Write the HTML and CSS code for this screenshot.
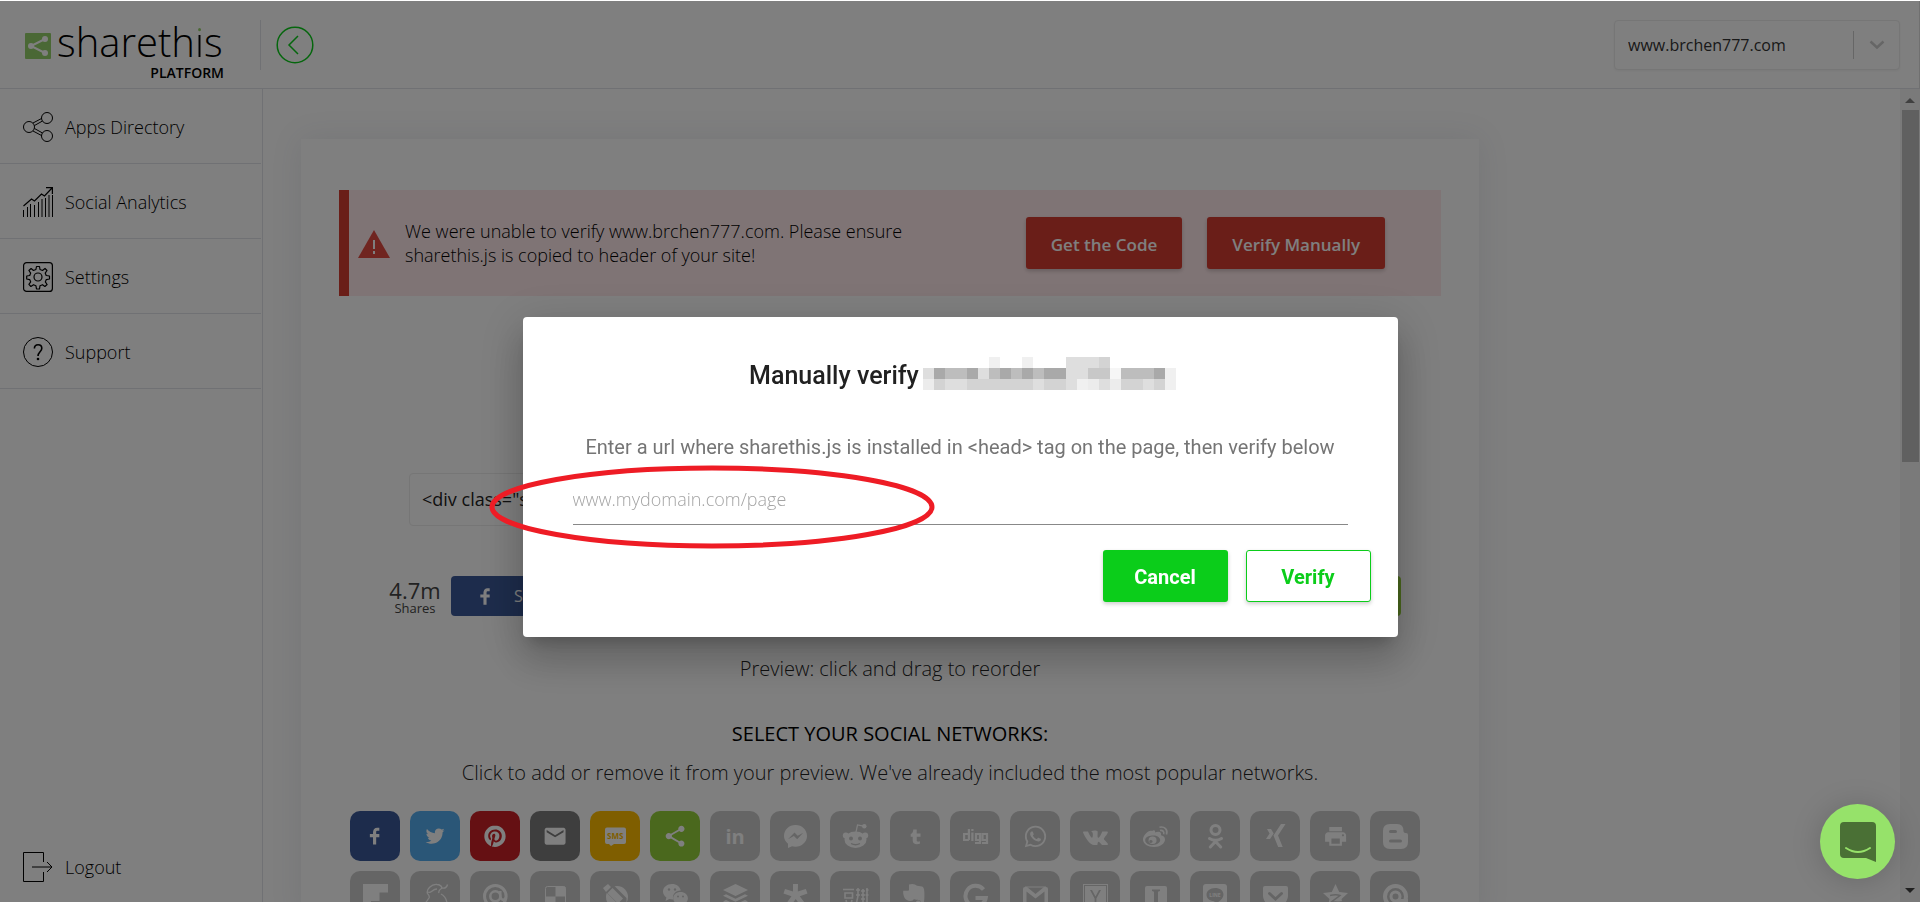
FILE: index.html
```
<!DOCTYPE html>
<html lang="en">
<head>
<meta charset="utf-8">
<title>ShareThis Platform</title>
<link rel="stylesheet" href="styles.css">
</head>
<body>
<div class="app">
  <header class="topbar">
    <a class="brand" href="#" aria-label="sharethis platform">
      <span class="brand-row">
        <svg class="brand-mark" viewBox="0 0 26 26" aria-hidden="true"><rect width="26" height="26" rx="1" fill="#95d06a"/><path d="M20 6 6 13l14 7" fill="none" stroke="#fff" stroke-width="2"/><circle cx="20" cy="6" r="3" fill="#fff"/><circle cx="6" cy="13" r="3" fill="#fff"/><circle cx="20" cy="20" r="3" fill="#fff"/></svg>
        <span class="wordmark">shareth<span class="wordmark-i">i</span>s</span>
      </span>
      <span class="brand-sub">PLATFORM</span>
    </a>
    <button class="back" type="button" aria-label="Back">
      <svg viewBox="0 0 38 38" aria-hidden="true"><circle cx="19" cy="19" r="17.8"/><path d="m22 10-9 9 9 9"/></svg>
    </button>
    <div class="site-picker">
      <select aria-label="Site"><option>www.brchen777.com</option></select>
      <span class="picker-arrow"><svg viewBox="0 0 16 10" aria-hidden="true"><path d="m1.500 1.500 6.500 6 6.500-6"/></svg></span>
    </div>
  </header>
  <div class="body">
    <nav class="sidebar">
      <a class="nav-item" href="#"><svg viewBox="0 0 30 30" aria-hidden="true"><g fill="none" stroke="#000"><circle cx="6" cy="15" r="5.500"/><circle cx="24" cy="6" r="5.500"/><circle cx="24" cy="24" r="5.500"/><path d="m10 11 8.500-4.500M11.500 13.500l8-4.500M10 19l8.500 4.500M11.500 16.500l8 4.500"/></g></svg>Apps Directory</a>
      <a class="nav-item" href="#"><svg viewBox="0 0 30 30" aria-hidden="true"><path d="M.5 23v7M4.500 20v10M7.500 17v13M11.500 18v12M15.500 15v15M19 12v18M22.500 11v19M26 8v22M29.500 8v22" fill="none" stroke="#000"/><path d="m.5 19 8-7 3 2 7-7 3 2L29 1M23 .6h6.400V7" fill="none" stroke="#000" stroke-width="1.200"/></svg>Social Analytics</a>
      <a class="nav-item" href="#"><svg viewBox="0 0 30 30" aria-hidden="true"><g fill="none" stroke="#000" stroke-width="1.200"><rect x=".6" y=".6" width="28.800" height="28.800" rx="3"/><circle cx="15" cy="15" r="4"/><path d="M13.500 4.500h3l.5 3 2.500 1 2.500-2 2 2-1.800 2.600 1 2.400 3.300.5v3l-3.200.6-1 2.300 1.800 2.600-2.200 2-2.400-1.800-2.500 1-.5 3.300h-3l-.6-3.300-2.400-1-2.600 1.800-2-2.200 1.800-2.400-1-2.300-3-.6v-3l3-.5 1-2.400-1.800-2.600 2.200-2 2.400 2 2.400-1z" stroke-linejoin="round"/></g></svg>Settings</a>
      <a class="nav-item" href="#"><svg viewBox="0 0 30 30" aria-hidden="true"><circle cx="15" cy="15" r="14.500" fill="none" stroke="#000"/><path d="M11.400 11.400c0-5 7.400-4.800 7.400-.2 0 3.400-3.800 3.800-3.800 7.800" fill="none" stroke="#000" stroke-width="1.600"/><circle cx="15" cy="22" r="1.300"/></svg>Support</a>
      <a class="nav-item nav-logout" href="#"><svg viewBox="0 0 30 30" aria-hidden="true"><path d="M20.500 10V.5H.5v29h20V20M9 15h20M24 10l5 5-5 5" fill="none" stroke="#000"/></svg>Logout</a>
    </nav>
    <main class="content">
      <section class="card">
        <div class="alert">
          <svg class="alert-icon" viewBox="0 0 32 28" aria-hidden="true"><path d="M16 0 32 28H0z" fill="#e04a40"/><path d="M16 10v9M16 21v3" stroke="#fff" stroke-width="2"/></svg>
          <p class="alert-text">We were unable to verify www.brchen777.com. Please ensure sharethis.js is copied to header of your site!</p>
          <div class="alert-actions">
            <button class="btn btn-red" type="button">Get the Code</button>
            <button class="btn btn-red" type="button">Verify Manually</button>
          </div>
        </div>
        <div class="code">&lt;div class="sharethis-inline-share-buttons"&gt;&lt;/div&gt;</div>
        <div class="share-row">
          <div class="total"><strong>4.7m</strong><span>Shares</span></div>
          <button class="share share-first fb" type="button"><svg viewBox="0 0 40 40" aria-hidden="true"><path d="m21.700 16.700h5v5h-5v11.600h-5v-11.600h-5v-5h5v-2.100c0-2 .6-4.500 1.800-5.900 1.300-1.300 2.800-2 4.700-2h3.500v5h-3.500c-.9 0-1.500.6-1.500 1.500z"/></svg>Share</button>
          <button class="share tw" type="button">Tweet</button>
          <button class="share pin" type="button">Pin</button>
          <button class="share mail" type="button">Email</button>
          <button class="share sms" type="button">SMS</button>
          <button class="share st" type="button">Share</button>
        </div>
        <p class="hint preview">Preview: click and drag to reorder</p>
        <h2 class="heading">SELECT YOUR SOCIAL NETWORKS:</h2>
        <p class="hint">Click to add or remove it from your preview. We've already included the most popular networks.</p>
        <div class="tiles">
          <button class="tile fb" type="button" aria-label="Facebook"><svg viewBox="0 0 50 50"><path transform="translate(12.500 12.500) scale(.63)" d="m21.700 16.700h5v5h-5v11.600h-5v-11.600h-5v-5h5v-2.100c0-2 .6-4.500 1.800-5.900 1.300-1.300 2.800-2 4.700-2h3.500v5h-3.500c-.9 0-1.500.6-1.500 1.500z"/></svg></button>
          <button class="tile tw" type="button" aria-label="Twitter"><svg viewBox="0 0 50 50"><path transform="translate(12.500 12.500) scale(.63)" d="m31.500 11.700c1.300-.8 2.200-2 2.700-3.400-1.400.7-2.700 1.200-4 1.400-1.100-1.200-2.600-1.900-4.400-1.900-1.700 0-3.200.6-4.400 1.800-1.200 1.200-1.800 2.700-1.800 4.400 0 .5.100.9.200 1.300-5.100-.1-9.400-2.300-12.700-6.400-.6 1-.9 2.100-.9 3.100 0 2.200 1 3.900 2.800 5.200-1.100-.1-2-.4-2.800-.8 0 1.500.5 2.800 1.400 4 .9 1.100 2.100 1.800 3.500 2.100-.5.100-1 .2-1.600.2-.5 0-.9 0-1.100-.1.400 1.200 1.100 2.300 2.100 3 1.100.8 2.300 1.200 3.600 1.300-2.200 1.700-4.700 2.600-7.600 2.600-.7 0-1.200 0-1.500-.1 2.800 1.900 6 2.800 9.500 2.800 3.500 0 6.700-.9 9.400-2.700 2.800-1.800 4.800-4.100 6.100-6.700 1.300-2.600 1.900-5.300 1.900-8.100v-.8c1.300-.9 2.300-2 3.100-3.200-1.100.5-2.300.8-3.500 1z"/></svg></button>
          <button class="tile pin" type="button" aria-label="Pinterest"><svg viewBox="0 0 50 50"><path transform="translate(14.300 14.600) scale(.89)" d="M12.017 0C5.396 0 .029 5.367.029 11.987c0 5.079 3.158 9.417 7.618 11.162-.105-.949-.199-2.403.041-3.439.219-.937 1.406-5.957 1.406-5.957s-.359-.72-.359-1.781c0-1.663.967-2.911 2.168-2.911 1.024 0 1.518.769 1.518 1.688 0 1.029-.653 2.567-.992 3.992-.285 1.193.6 2.165 1.775 2.165 2.128 0 3.768-2.245 3.768-5.487 0-2.861-2.063-4.869-5.008-4.869-3.410 0-5.409 2.562-5.409 5.199 0 1.033.394 2.143.889 2.741.099.120.112.225.085.345-.090.375-.293 1.199-.334 1.363-.053.225-.172.271-.401.165-1.495-.690-2.433-2.878-2.433-4.646 0-3.776 2.748-7.252 7.920-7.252 4.158 0 7.392 2.967 7.392 6.923 0 4.135-2.607 7.462-6.233 7.462-1.214 0-2.354-.629-2.758-1.379l-.749 2.848c-.269 1.045-1.004 2.352-1.498 3.146 1.123.345 2.306.535 3.550.535 6.607 0 11.985-5.365 11.985-11.987C23.970 5.390 18.592.026 11.985.026z"/></svg></button>
          <button class="tile mail" type="button" aria-label="Email"><svg viewBox="0 0 50 50"><path transform="translate(12.500 12.700) scale(.63)" d="m33.400 13.400v-3.400l-13.400 8.400-13.400-8.400v3.400l13.400 8.200z m0-6.800q1.300 0 2.300 1.100t.9 2.300v20q0 1.300-.9 2.300t-2.300 1.100h-26.800q-1.300 0-2.300-1.100t-.9-2.300v-20q0-1.300.9-2.300t2.300-1.100h26.800z"/></svg></button>
          <button class="tile sms" type="button" aria-label="SMS"><svg viewBox="0 0 50 50"><path d="M17 16.500h17q2 0 2 2V31q0 2-2 2H24l-3 2-2-2h-2q-2 0-2-2V18.500q0-2 2-2z"/><text class="t-sms" x="25.300" y="28">SMS</text></svg></button>
          <button class="tile st" type="button" aria-label="ShareThis"><svg viewBox="0 0 50 50"><path transform="translate(12.500 12.500) scale(.63)" d="m30 26.800c2.700 0 4.800 2.200 4.800 4.800s-2.100 5-4.800 5-4.800-2.300-4.800-5c0-.3 0-.7 0-1.100l-11.800-6.800c-.9.800-2.100 1.300-3.400 1.300-2.700 0-5-2.300-5-5s2.300-5 5-5c1.300 0 2.500.5 3.400 1.300l11.800-6.800c-.1-.4-.2-.8-.2-1.100 0-2.800 2.300-5 5-5s5 2.200 5 5-2.300 5-5 5c-1.300 0-2.500-.6-3.400-1.400l-11.800 6.800c.1.400.2.800.2 1.200s-.1.800-.2 1.200l11.900 6.800c.9-.7 2.100-1.200 3.300-1.200z"/></svg></button>
          <button class="tile" type="button" aria-label="LinkedIn"><svg viewBox="0 0 50 50"><text class="t-in" x="25" y="33">in</text></svg></button>
          <button class="tile" type="button" aria-label="Messenger"><svg viewBox="0 0 50 50"><path fill-rule="evenodd" d="M25.500 14C19 14 14 18.800 14 25c0 3 1.500 5.800 4 7.700V37l4-1.700c7.800 2 15-3.300 15-10.300 0-6.200-5-11-11.500-11zM18 28.300l6.500-6.800 3.200 3.200 5.500-3-6 6.500-3.300-3.200z"/></svg></button>
          <button class="tile" type="button" aria-label="Reddit"><svg viewBox="0 0 50 50"><ellipse cx="25.500" cy="28.700" rx="11" ry="8.200"/><circle cx="15.800" cy="24.500" r="3"/><circle cx="35.200" cy="24.500" r="3"/><path d="m26 21 1.500-7 6 1.200" class="line" stroke-width="1.200"/><circle cx="34.300" cy="15.300" r="2.200"/><g class="cut"><circle cx="21" cy="27.500" r="2"/><circle cx="30" cy="27.500" r="2"/></g><path class="cutline" d="M21 32.500q4.500 2.500 9 0" stroke-width="1.300"/></svg></button>
          <button class="tile" type="button" aria-label="Tumblr"><svg viewBox="0 0 50 50"><path d="M23.300 18.500h3.400v4h3.800v3.200h-3.800v3.600c0 1.700 1.800 1.500 3.200.9v2.600c-4 1.200-7.200.2-7.200-3.300v-3.800h-2v-2.600c1.600-.6 2.500-2 2.600-4.600z"/></svg></button>
          <button class="tile" type="button" aria-label="Digg"><svg viewBox="0 0 50 50"><path class="line" stroke-width="2.200" d="M18.900 18v11M18.900 23h-4.800v6h4.800M22.400 18v2M22.400 21.500V30M30 33v-10h-4v6h4M30 27v5h-5M37 22v10h-5M37 23h-4.500v6H37"/></svg></button>
          <button class="tile" type="button" aria-label="WhatsApp"><svg viewBox="0 0 50 50"><path transform="translate(14.800 14.800) scale(.89)" d="M17.472 14.382c-.297-.149-1.758-.867-2.030-.967-.273-.099-.471-.148-.670.150-.197.297-.767.966-.940 1.164-.173.199-.347.223-.644.075-.297-.150-1.255-.463-2.390-1.475-.883-.788-1.480-1.761-1.653-2.059-.173-.297-.018-.458.130-.606.134-.133.298-.347.446-.520.149-.174.198-.298.298-.497.099-.198.050-.371-.025-.520-.075-.149-.669-1.612-.916-2.207-.242-.579-.487-.500-.669-.510-.173-.008-.371-.010-.570-.010-.198 0-.520.074-.792.372-.272.297-1.040 1.016-1.040 2.479 0 1.462 1.065 2.875 1.213 3.074.149.198 2.096 3.200 5.077 4.487.709.306 1.262.489 1.694.625.712.227 1.360.195 1.871.118.571-.085 1.758-.719 2.006-1.413.248-.694.248-1.289.173-1.413-.074-.124-.272-.198-.570-.347m-5.421 7.403h-.004a9.870 9.870 0 01-5.031-1.378l-.361-.214-3.741.982.998-3.648-.235-.374a9.860 9.860 0 01-1.510-5.260c.001-5.450 4.436-9.884 9.888-9.884 2.640 0 5.122 1.030 6.988 2.898a9.825 9.825 0 012.893 6.994c-.003 5.450-4.437 9.884-9.885 9.884m8.413-18.297A11.815 11.815 0 0012.050 0C5.495 0 .160 5.335.157 11.892c0 2.096.547 4.142 1.588 5.945L.057 24l6.305-1.654a11.882 11.882 0 005.683 1.448h.005c6.554 0 11.890-5.335 11.893-11.893a11.821 11.821 0 00-3.480-8.413z"/></svg></button>
          <button class="tile" type="button" aria-label="VK"><svg viewBox="0 0 50 50"><path transform="translate(13 14.300) scale(1.040)" d="M13.162 18.994c.609 0 .858-.406.851-.915-.031-1.917.714-2.949 2.059-1.604 1.488 1.488 1.796 2.519 3.603 2.519h3.200c.808 0 1.126-.260 1.126-.668 0-.863-1.421-2.386-2.625-3.504-1.686-1.565-1.765-1.602-.313-3.486 1.801-2.339 4.157-5.336 2.073-5.336h-3.981c-.772 0-.828.435-1.103 1.083-.995 2.347-2.886 5.387-3.604 4.922-.751-.485-.407-2.406-.350-5.261.015-.754.011-1.271-1.141-1.539-.629-.145-1.241-.205-1.809-.205-2.273 0-3.841.953-2.950 1.119 1.571.293 1.420 3.692 1.054 5.160-.638 2.556-3.036-2.024-4.035-4.305-.241-.548-.315-.974-1.175-.974h-3.255c-.492 0-.787.160-.787.516 0 .602 2.960 6.720 5.786 9.770 2.756 2.975 5.480 2.708 7.376 2.708z"/></svg></button>
          <button class="tile" type="button" aria-label="Weibo"><svg viewBox="0 0 50 50"><path fill-rule="evenodd" d="M22 20c-3-1.500-9 4-9 8.500s5 7.500 11 7.500 11-3.500 11-7.500c0-2.500-2-3.800-4-4.200.8-3-1.500-4.300-6-2.800.5-1.800-.5-3-3-1.500zm0 4.500c4.500-.5 8 1.500 8.200 4.300s-3 5-7.200 5.300-7.600-1.600-7.800-4.500 2.700-4.800 6.800-5.100z"/><path fill-rule="evenodd" d="M22.500 25.500a4 3.800 0 1 0 .1 7.600 4 3.800 0 0 0-.1-7.600zm-1.500 3.500a1.700 1.500 0 1 1-.1 3 1.700 1.500 0 0 1 .1-3z"/><path class="line" stroke-width="1.600" d="M29.500 16.200c5-1.200 8.700 2.500 7 7.300M30 19.500c3-.5 4.500 1.500 3.600 3.800"/></svg></button>
          <button class="tile" type="button" aria-label="Odnoklassniki"><svg viewBox="0 0 50 50"><circle class="line" cx="25.500" cy="19" r="4.500" stroke-width="3"/><path class="line" stroke-width="3" stroke-linecap="round" d="M19.500 27.500q6 3.500 12 0M25.500 30.500l-5.200 5.500M25.500 30.500l5.200 5.500"/></svg></button>
          <button class="tile" type="button" aria-label="Xing"><svg viewBox="0 0 50 50"><path d="M31 13h4.500L28 24.500 32.700 36h-4.500L23.500 24.500zM17 18h4l2.700 4.500L20 28h-4l3.600-5.500z"/></svg></button>
          <button class="tile" type="button" aria-label="Print"><svg viewBox="0 0 50 50"><path transform="translate(13 12.800) scale(1.050)" d="M19 8H5c-1.660 0-3 1.340-3 3v6h4v4h12v-4h4v-6c0-1.660-1.340-3-3-3zm-3 11H8v-5h8v5zm3-7c-.550 0-1-.450-1-1s.450-1 1-1 1 .450 1 1-.450 1-1 1zm-1-9H6v4h12V3z"/></svg></button>
          <button class="tile" type="button" aria-label="Blogger"><svg viewBox="0 0 50 50"><path fill-rule="evenodd" d="M20 13h7q6.500 0 6.500 7c0 1.500 1 2 2.500 2q2 0 2 2v7q0 7-7 7H20q-7 0-7-7V20q0-7 7-7zm.5 6a1.300 1.300 0 0 0 0 3h5a1.300 1.300 0 0 0 0-3zm0 9.500a1.300 1.300 0 0 0 0 3h10a1.300 1.300 0 0 0 0-3z"/></svg></button>
          <button class="tile" type="button" aria-label="Flipboard"><svg viewBox="0 0 50 50"><path d="M13 13h25v8.500h-8.500V30H21v8h-8z"/></svg></button>
          <button class="tile" type="button" aria-label="MailChimp"><svg viewBox="0 0 50 50"><path class="line" stroke-width="1.300" d="M13 38c1-5 4-8 6-11 1-2-.5-3-1.500-4.500-1.500-4 4-9.500 9.500-9 3 .2 4.500 1.500 5 3.500 3 .5 5-1 5.500-3.500M32 17c-3 2-4 3-3 5M31 23c4 2 7 6 6 15M18 21c3 2 4-3 9-3"/></svg></button>
          <button class="tile" type="button" aria-label="Mail.ru"><svg viewBox="0 0 50 50"><circle class="line" cx="25.300" cy="25.300" r="10.800" stroke-width="3"/><circle class="line" cx="25.300" cy="25.300" r="5" stroke-width="2.500"/><path class="line" stroke-width="2.500" d="M30.300 20v6q2 5 5.500 1"/></svg></button>
          <button class="tile" type="button" aria-label="Delicious"><svg viewBox="0 0 50 50"><rect class="line" x="15.500" y="15.500" width="20" height="20" rx="2" stroke-width="1"/><path d="M25.500 15.500H34q1.500 0 1.500 1.500v8.500h-10zM15.500 25.500h10v10h-10z"/></svg></button>
          <button class="tile" type="button" aria-label="LiveJournal"><svg viewBox="0 0 50 50"><circle cx="27" cy="26" r="11"/><path class="cut" d="m15 20 8-6.500L36.500 27v7H29z"/><path d="m13 17 5-4 3 3-5 5zM17.500 22l5-5 10.500 10.500-5 5z"/></svg></button>
          <button class="tile" type="button" aria-label="WeChat"><svg viewBox="0 0 50 50"><path d="M22 13c-5 0-9 3.300-9 7.600 0 2.400 1.300 4.500 3.400 6L15.500 30l3.700-2q2 .5 4 .4c-1.300-4.500 2.300-8.800 7.600-8.800C30 15.600 26.500 13 22 13z"/><path d="M30.500 21c-4 0-7.300 2.700-7.300 6.200s3.300 6.300 7.300 6.300q1.500 0 2.500-.4l3 1.600-.7-2.600c1.600-1.100 2.600-2.900 2.600-4.900 0-3.500-3.300-6.200-7.400-6.200z"/><g class="cut"><circle cx="19" cy="18.500" r="1.200"/><circle cx="25" cy="18.500" r="1.200"/><circle cx="28" cy="25.500" r="1"/><circle cx="33" cy="25.500" r="1"/></g></svg></button>
          <button class="tile" type="button" aria-label="Buffer"><svg viewBox="0 0 50 50"><path d="m25.500 13 12.500 6-12.500 6L13 19zM16 23.300l9.500 4.500 9.500-4.500 3 1.400-12.500 6-12.500-6zM16 29l9.500 4.500L35 29l3 1.400-12.500 6-12.500-6z"/></svg></button>
          <button class="tile" type="button" aria-label="Diaspora"><svg viewBox="0 0 50 50"><path d="M23 13h5l-.2 7.500 8-2.500 1.700 4.500-7.800 2.700 4.800 6.300-4 3-4.800-6.500-4.700 6.500-4-3 4.500-6.300-8-2.700L15 18l8 2.500z"/></svg></button>
          <button class="tile" type="button" aria-label="Douban"><svg viewBox="0 0 50 50"><path class="line" stroke-width="1.600" d="M13 18.500h11M15 22h7.500v5H15zM16 29l1 4M22 29l-1 4M12.500 34H24M26 19h4M26 24h4M28 17v8l-2 9M31 20h4M31 24h4M31 28h4M33 18v17M36 19h2.500M35.500 24h3M37 17v18"/></svg></button>
          <button class="tile" type="button" aria-label="Evernote"><svg viewBox="0 0 50 50"><path d="M19 13.500q5-1.500 8 1.200l5 .8q2 .5 2.300 5c.3 6 0 12-1.500 14-2 2.500-7.300 2-7.300-1.800 0-3 3-3.800 4.500-2.500v2h-2v1.500c2 .8 2.500-1.500 2.500-4-3-1.500-5.500 0-6.500-2-1 3.500-8 2.500-9.500-1-1.300-3-1.500-5-1.200-7H18q1 0 1-1z"/></svg></button>
          <button class="tile" type="button" aria-label="Google"><svg viewBox="0 0 50 50"><path class="line" stroke-width="4" d="M33.500 18.500A10.200 10.200 0 1 0 35.700 27H25.500"/></svg></button>
          <button class="tile" type="button" aria-label="Gmail"><svg viewBox="0 0 50 50"><path d="M15 16h2l8.500 7 8.500-7h2q2 0 2 2v15q0 2-2 2h-1.500V20.500l-9 7-9-7V35H15q-2 0-2-2V18q0-2 2-2z"/><path class="line" d="M15 16h21" stroke-width="1"/></svg></button>
          <button class="tile" type="button" aria-label="Hacker News"><svg viewBox="0 0 50 50"><rect class="line" x="13.500" y="13.500" width="24" height="24" stroke-width="1"/><path fill-rule="evenodd" d="M15 15h21v21H15zM20 19l4.600 8.500V34h1.800v-6.500L31 19h-2l-3.500 6.500L22 19z"/></svg></button>
          <button class="tile" type="button" aria-label="Instapaper"><svg viewBox="0 0 50 50"><path fill-rule="evenodd" d="M17 15h18q2 0 2 2v21H15V17q0-2 2-2zM22 18.500v1.500l2 .8V32l-2 1v1.500h8V33l-2-1V20.800l2-.8v-1.500z"/></svg></button>
          <button class="tile" type="button" aria-label="Line"><svg viewBox="0 0 50 50"><rect x="13" y="13" width="24" height="24" rx="3"/><path class="cut" d="M25 17c-5 0-8.500 3-8.500 6.700 0 3.500 3 6 7.500 6.500.8.300.5 2 .5 3 4-2 9-5.500 9-9.500S30 17 25 17z"/><text class="t-line" x="25" y="26">LINE</text></svg></button>
          <button class="tile" type="button" aria-label="Pocket"><svg viewBox="0 0 50 50"><path d="M15 15h21q2 0 2 2v7c0 7-5.500 12-12.500 12S13 31 13 24v-7q0-2 2-2z"/><path class="cutline" stroke-width="3" stroke-linecap="round" d="m19.500 22.500 6 5.500 6-5.500"/></svg></button>
          <button class="tile" type="button" aria-label="QZone"><svg viewBox="0 0 50 50"><path d="m25.500 13 3.700 8 8.800 1-6.500 6 2 9-8-4.500-8 4.500 2-9-6.500-6 8.800-1z"/><path class="cutline" stroke-width="1.500" d="M20 24.500q6-1.500 10 0l-8 6q6 1.500 12 0"/></svg></button>
          <button class="tile" type="button" aria-label="Refind"><svg viewBox="0 0 50 50"><circle class="line" cx="25.500" cy="25.500" r="10.500" stroke-width="4"/><circle class="line" cx="25.500" cy="25.500" r="4.500" stroke-width="3"/><path d="M28 28h10v10H28z"/></svg></button>
        </div>
      </section>
    </main>
    <div class="scrollbar" aria-hidden="true"><span class="arrow-up"></span><span class="thumb"></span><span class="arrow-down"></span></div>
  </div>
</div>

<div class="overlay">
  <form class="modal" role="dialog" aria-labelledby="modal-title">
    <h1 class="modal-title" id="modal-title">Manually verify
      <svg class="mosaic" viewBox="0 0 23 3" shape-rendering="crispEdges" aria-hidden="true"><g fill="#f0f0f0"><path d="M6 0h1v1H6zM9 0h1v1H9zM22 1h1v2h-1zM14 2h1v1h-1z"/></g><g fill="#ececec"><path d="M0 2h1v1H0zM15 2h1v1h-1zM17 2h1v1h-1z"/></g><path fill="#f6f6f6" d="M17 1h1v1h-1z"/><g fill="#dedede"><path d="M13 0h3v1h-3zM0 1h1v1H0zM5 1h1v1H5zM13 1h2v1h-2zM2 2h2v1H2zM10 2h1v1h-1zM13 2h1v1h-1zM20 2h1v1h-1zM16 2h1v1h-1z"/></g><g fill="#d3d3d3"><path d="M16 0h1v1h-1zM1 2h1v1H1zM4 2h6v1H4zM11 2h2v1h-2zM18 2h2v1h-2zM21 2h1v1h-1z"/></g><g fill="#bdbdbd"><path d="M2 1h2v1H2zM6 1h1v1H6zM8 1h1v1H8zM10 1h1v1h-1zM18 1h3v1h-3z"/></g><path fill="#c8c8c8" d="M15 1h2v1h-2z"/><path fill="#a9a9a9" d="M1 1h1v1H1zM4 1h1v1H4zM7 1h1v1H7zM9 1h1v1H9zM11 1h2v1h-2zM21 1h1v1h-1z"/></svg>
    </h1>
    <label class="modal-text" for="url">Enter a url where sharethis.js is installed in &lt;head&gt; tag on the page, then verify below</label>
    <div class="field">
      <input id="url" type="text" placeholder="www.mydomain.com/page">
      <svg class="marker" viewBox="0 0 446 84" aria-hidden="true"><ellipse cx="223" cy="42" rx="220" ry="39"/></svg>
    </div>
    <div class="modal-actions">
      <button class="btn btn-green" type="button">Cancel</button>
      <button class="btn btn-outline" type="submit">Verify</button>
    </div>
  </form>
</div>

<button class="chat" type="button" aria-label="Open chat"><svg viewBox="0 0 36 40" aria-hidden="true"><path d="M4 0h28q4 0 4 4v36l-10-4H4q-4 0-4-4V4q0-4 4-4z" fill="#4a7035"/><path d="M6 26q12 8 24 0" fill="none" stroke="#96e26a" stroke-width="2" stroke-linecap="round"/></svg></button>
</body>
</html>
```
FILE: styles.css
```
* { box-sizing: border-box; }
body { margin: 0; background: #fff; color: #000; font-family: "Open Sans", "Noto Sans", sans-serif; font-size: 18px; }
h1, h2, p { margin: 0; font-weight: 400; }
button { font: inherit; border: 0; padding: 0; cursor: pointer; }
a { color: inherit; text-decoration: none; }

.app { display: flex; flex-direction: column; height: 100vh; padding-top: 1px; overflow: hidden; }

.topbar { display: flex; align-items: center; flex: none; height: 88px; padding: 0 19px 0 25px; border-bottom: 1px solid #e1e2e8; border-right: 1px solid #e0e0e0; }
.brand { display: flex; flex-direction: column; width: 236px; height: 50px; padding-right: 36px; border-right: 1px solid #e1e2e8; }
.brand-row { display: flex; align-items: center; gap: 6px; }
.brand-mark { flex: none; width: 26px; height: 26px; margin-top: 8px; }
.wordmark { font-family: "Open Sans", sans-serif; font-size: 40px; font-weight: 350; line-height: 44px; }
.wordmark-i { background: linear-gradient(#95d06a 19px, #000 19px); background-clip: text; color: transparent; }
.brand-sub { font-size: 14px; font-weight: 600; line-height: 18px; text-align: right; }
.back { width: 38px; height: 38px; margin-left: 15px; background: none; }
.back svg { display: block; width: 38px; height: 38px; fill: none; stroke: #0bcd1a; stroke-width: 1.500; }
.site-picker { position: relative; width: 286px; height: 50px; margin-left: auto; }
.site-picker select { width: 100%; height: 100%; padding: 0 60px 0 13px; border: 1px solid #ececec; border-radius: 4px; background: #fff; color: #333; font: 16px "Open Sans", sans-serif; appearance: none; box-shadow: 0 1px 3px rgba(0,0,0,.05); }
.picker-arrow { position: absolute; top: 11px; right: 0; display: flex; align-items: center; justify-content: center; width: 47px; height: 28px; border-left: 1px solid #ccc; pointer-events: none; }
.picker-arrow svg { width: 16px; height: 10px; fill: none; stroke: #ccc; stroke-width: 2.500; }

.body { display: flex; flex: 1; min-height: 0; }
.sidebar { display: flex; flex-direction: column; flex: none; width: 263px; padding-right: 1px; border-right: 1px solid #e1e2e8; }
.nav-item { display: flex; align-items: center; gap: 12px; height: 75px; padding: 2px 0 0 23px; border-bottom: 1px solid #e1e2e8; font-weight: 350; }
.nav-item svg { flex: none; width: 30px; height: 30px; }
.nav-logout { height: 70px; margin-top: auto; padding-top: 0; border-bottom: 0; }

.content { flex: 1; min-width: 0; padding: 50px 421px 0 38px; overflow: hidden; background: #fefefe; }
.card { min-height: 100%; padding: 51px 38px 0; background: #fff; box-shadow: 0 0 30px rgba(60,70,110,.1); }
.alert { display: flex; align-items: center; height: 106px; padding: 0 56px 0 9px; border-left: 10px solid #d43c31; background: #ffe9eb; }
.alert-icon { flex: none; width: 32px; height: 28px; margin-top: 2px; }
.alert-text { width: 530px; margin-left: 15px; font-weight: 350; line-height: 24px; }
.alert-actions { display: flex; gap: 25px; margin-left: auto; }
.btn { height: 52px; padding: 2px 25px 0; border-radius: 3px; box-shadow: 0 2px 4px rgba(0,0,0,.2); font-weight: 600; }
.btn-red { background: #d43c31; color: #fff; font-size: 17px; }
.code { height: 53px; margin: 177px 70px 0; padding: 0 12px; border: 1px solid #ececec; border-radius: 4px; color: #222; line-height: 51px; overflow: hidden; }
.share-row { display: flex; gap: 10px; margin: 50px 40px 0 50px; }
.total { display: flex; flex-direction: column; width: 52px; text-align: center; color: #444; }
.total strong { font-size: 22px; font-weight: 400; line-height: 28px; }
.total span { font-size: 13px; line-height: 8px; }
.share { display: flex; align-items: center; justify-content: center; gap: 16px; flex: 1; height: 40px; border-radius: 4px; color: #fff; font-size: 16px; }
.share-first { justify-content: flex-start; padding-left: 22px; }
.share svg { width: 25px; height: 25px; fill: #fff; }
.hint { color: #222; font-size: 20px; font-weight: 300; line-height: 26px; text-align: center; }
.preview { margin-top: 40px; }
.heading { margin: 39px 0 13px; font-size: 20px; line-height: 26px; text-align: center; }
.tiles { display: flex; flex-wrap: wrap; gap: 10px; margin: 25px 0 0 11px; }
.tile { width: 50px; height: 50px; border-radius: 10px; background: #cbcbcb; }
.tile svg { display: block; width: 50px; height: 50px; fill: #fff; }
.tile .line { fill: none; stroke: #fff; }
.tile .cut { fill: #cbcbcb; }
.tile .cutline { fill: none; stroke: #cbcbcb; }
.tile text { font-family: "Open Sans", sans-serif; font-weight: 700; text-anchor: middle; }
.t-sms { font-size: 8px; fill: #ffbd00; }
.t-in { font-size: 20px; }
.t-line { font-size: 5px; }
.fb { background: #3b5998; }
.tw { background: #55acee; }
.pin { background: #cb2027; }
.mail { background: #7d7d7d; }
.sms { background: #ffbd00; }
.st { background: #95d03a; }

.scrollbar { display: flex; flex-direction: column; align-items: center; flex: none; width: 20px; padding: 9px 0; background: #f5f5f5; }
.arrow-up { border: 5px solid transparent; border-top: 0; border-bottom-color: #808080; }
.thumb { width: 17px; height: 352px; margin-top: 7px; background: #c1c1c1; }
.arrow-down { margin-top: auto; border: 5px solid transparent; border-bottom: 0; border-top-color: #404040; }

.overlay { position: fixed; inset: 1px 0 0; display: flex; justify-content: center; align-items: flex-start; padding-top: 316px; background: rgba(0,0,0,.5); }
.modal { width: 875px; padding: 40px 27px 35px; border-radius: 4px; background: #fff; box-shadow: 0 11px 15px -7px rgba(0,0,0,.2), 0 24px 38px 3px rgba(0,0,0,.14), 0 9px 46px 8px rgba(0,0,0,.12); font-family: Roboto, sans-serif; }
.modal-title { display: flex; align-items: center; justify-content: center; gap: 4px; height: 36px; padding-left: 5px; color: #212121; font-size: 25px; font-weight: 500; }
.mosaic { width: 253px; height: 33px; margin-bottom: 3px; }
.modal-text { display: block; margin-top: 41px; color: #757575; font-size: 20px; line-height: 26px; text-align: center; }
.field { position: relative; margin: 13px 23px 0; }
.field input { display: block; width: 100%; height: 52px; padding: 0; border: 0; border-bottom: 1px solid #888; outline: 0; background: none; font: 350 18px "Open Sans", sans-serif; }
.field input::placeholder { color: #a4a4a4; opacity: 1; }
.marker { position: absolute; top: -8px; left: -84px; width: 446px; height: 84px; fill: none; stroke: #ee1c25; stroke-width: 5; pointer-events: none; }
.modal-actions { display: flex; justify-content: flex-end; gap: 18px; margin-top: 25px; }
.modal-actions .btn { width: 125px; padding: 2px 0 0; font-size: 20px; font-weight: 700; }
.btn-green { background: #0bcd1a; color: #fff; }
.btn-outline { border: 1px solid #0bcd1a; background: #fff; color: #0bcd1a; }

.chat { position: fixed; right: 25px; bottom: 23px; display: flex; align-items: center; justify-content: center; width: 75px; height: 75px; border-radius: 50%; background: #96e26a; box-shadow: 0 2px 30px rgba(0,0,0,.18); }
.chat svg { width: 36px; height: 40px; }
```
